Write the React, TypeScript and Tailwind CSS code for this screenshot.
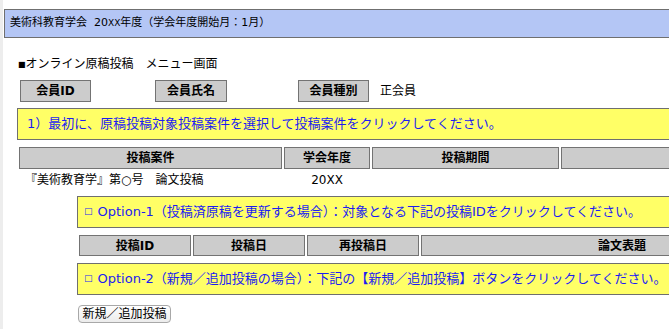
import React from "react";

// Online manuscript submission — menu screen

const font = "font-['DejaVu_Sans','Noto_Sans_CJK_JP',sans-serif]";

function HeadCell({ w, children, className = "" }: { w: string; children?: React.ReactNode; className?: string }) {
  return (
    <div
      className={`${w} h-full shrink-0 border border-[#737373] bg-[#cccccc] flex items-center justify-center text-[12px] font-bold text-black ${className}`}
    >
      {children}
    </div>
  );
}

function Notice({ children, className = "" }: { children: React.ReactNode; className?: string }) {
  return (
    <div
      className={`h-[32px] w-[900px] shrink-0 border border-[#6f6f6f] bg-[#ffff66] flex items-center text-[13px] text-[#1c1cf2] whitespace-nowrap ${className}`}
    >
      {children}
    </div>
  );
}

export default function App() {
  const projectCols = [
    { label: "投稿案件", w: "w-[263px]" },
    { label: "学会年度", w: "w-[86px]" },
    { label: "投稿期間", w: "w-[187px]" },
    { label: "", w: "w-[200px]" },
  ];

  const paperCols = [
    { label: "投稿ID", w: "w-[112px]" },
    { label: "投稿日", w: "w-[112px]" },
    { label: "再投稿日", w: "w-[112px]" },
    { label: "論文表題", w: "w-[402px]" },
  ];

  return (
    <div className={`h-[329px] w-[669px] overflow-hidden bg-white border-l-[3px] border-[#ededed] text-black ${font}`}>
      {/* header */}
      <div className="pt-[9px] pl-px">
        <div className="h-[29px] w-[900px] border border-[#6f6f6f] bg-[#b4c6f5] flex items-center pl-[5px] text-[11px] whitespace-nowrap">
          美術科教育学会&nbsp;&nbsp;20<span className="text-[9px]">XX</span>年度（学会年度開始月：1月）
        </div>
      </div>

      <div className="mt-[16px] ml-[15px] h-[20px] leading-[20px] text-[12px] whitespace-nowrap">
        <span className="text-[8px] align-[1px]">■</span>オンライン原稿投稿　メニュー画面
      </div>

      {/* member info */}
      <div className="mt-[6px] ml-[17px] h-[22px] flex items-center">
        <HeadCell w="w-[71px]">会員ID</HeadCell>
        <HeadCell w="w-[72px]" className="ml-[64px]">会員氏名</HeadCell>
        <HeadCell w="w-[71px]" className="ml-[71px]">会員種別</HeadCell>
        <span className="ml-[11px] text-[12px]">正会員</span>
      </div>

      <Notice className="mt-[6px] ml-[14px] pl-[9px]">
        1）最初に、原稿投稿対象投稿案件を選択して投稿案件をクリックしてください。
      </Notice>

      {/* projects table */}
      <div className="mt-[7px] ml-[16px] h-[22px] flex gap-[2px]">
        {projectCols.map((c, i) => (
          <HeadCell key={i} w={c.w}>
            {c.label}
          </HeadCell>
        ))}
      </div>
      <div className="mt-[2px] ml-[16px] h-[18px] flex text-[12px] leading-[18px] whitespace-nowrap">
        <div className="w-[265px] pl-[6px]">『美術教育学』第○号　論文投稿</div>
        <div className="w-[86px] text-center">20XX</div>
      </div>

      <Notice className="mt-[7px] ml-[74px] pl-[6px]">
        <span className="text-[9px] mr-[5px]">□</span>Option-1（投稿済原稿を更新する場合）：対象となる下記の投稿IDをクリックしてください。
      </Notice>

      {/* papers table */}
      <div className="mt-[7px] ml-[76px] h-[21px] flex gap-[2px]">
        {paperCols.map((c, i) => (
          <HeadCell key={i} w={c.w}>
            {c.label}
          </HeadCell>
        ))}
      </div>

      <Notice className="mt-[7px] ml-[74px] pl-[6px]">
        <span className="text-[9px] mr-[5px]">□</span>Option-2（新規／追加投稿の場合）：下記の【新規／追加投稿】ボタンをクリックしてください。
      </Notice>

      <div className="mt-[6px] ml-[75px]">
        <button className="h-[18px] w-[93px] rounded-[4px] border border-[#a8a8a8] bg-gradient-to-b from-white to-[#ececec] text-[12px] leading-none text-black">
          新規／追加投稿
        </button>
      </div>
    </div>
  );
}
